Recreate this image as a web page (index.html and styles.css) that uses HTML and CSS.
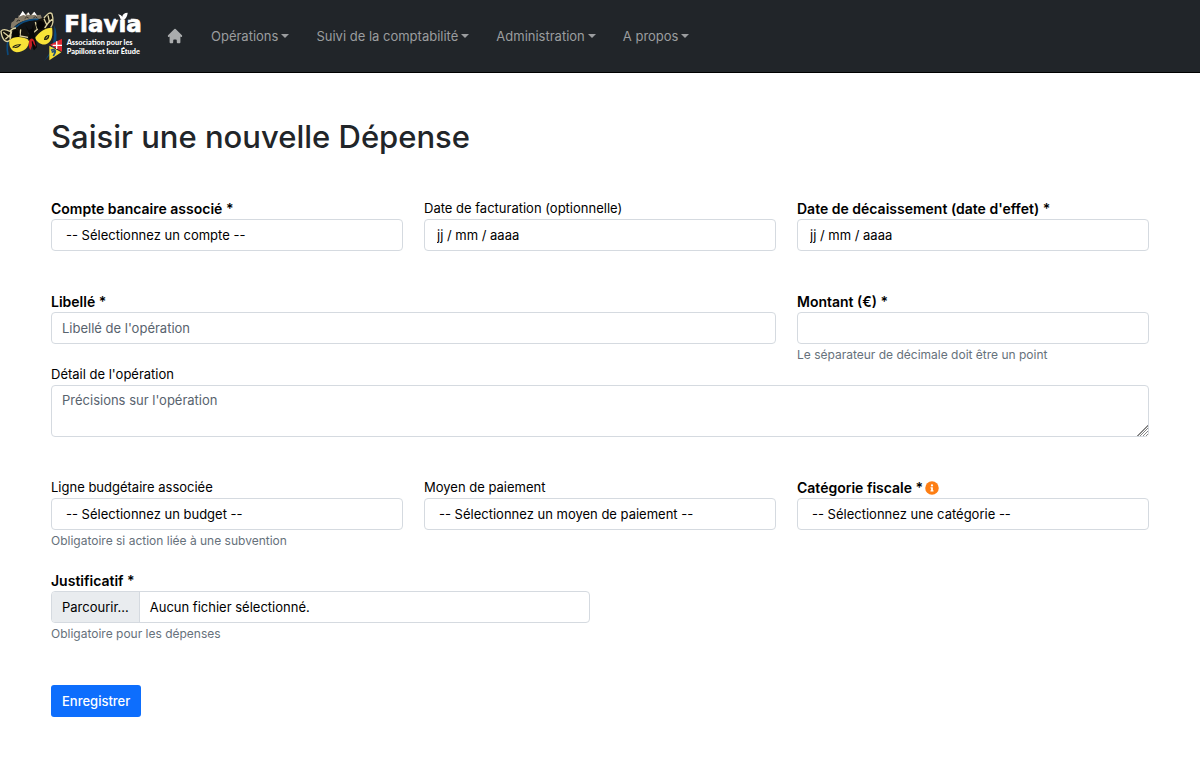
FILE: index.html
```html
<!DOCTYPE html>
<html lang="fr">
<head>
<meta charset="utf-8">
<meta name="viewport" content="width=device-width, initial-scale=1">
<title>Saisir une nouvelle Dépense</title>
<link rel="stylesheet" href="styles.css">
</head>
<body>
<header class="navbar">
  <a class="brand" href="#" aria-label="Flavia">
    <svg class="brand-logo" viewBox="0 0 450 216" aria-hidden="true">
      <!-- mountains -->
      <path d="M32 84 L34 68 L42 62 L46 54 L54 54 L56 46 L62 47 L68 33 L76 44 L84 37 L92 46 L102 35 L110 46 L122 44 L128 60 L112 58 L90 60 L66 68 L44 84Z" fill="#857b69"/>
      <path d="M57 50 L68 33 L79 48 L70 45Z M95 46 L103 35 L112 48 L104 44Z M80 44 L85 37 L90 44Z" fill="#fff"/>
      <path d="M50 66 L54 60 L60 62 M74 56 L80 51 L86 54 M100 54 L106 50 L112 54" fill="none" stroke="#3a352c" stroke-width="3"/>
      <!-- globe outline -->
      <path d="M36 92 C44 72 66 61 92 60 C108 58 122 62 130 70 L98 100 L70 96Z" fill="#111315"/>
      <path d="M24 165 C16 126 28 86 70 66 C88 58 108 55 128 62" fill="none" stroke="#0b4a7d" stroke-width="5"/>
      <path d="M163 76 C178 112 168 154 132 183 C154 158 164 128 163 76Z" fill="#0b4a7d"/>
      <!-- upper wings -->
      <path d="M3 94 C8 86 22 90 30 94 C42 78 62 80 78 92 L94 112 L62 116 L30 120 C18 132 10 118 3 94Z" fill="#15130d"/>
      <path d="M158 43 C150 34 142 44 134 54 C118 52 104 64 96 84 L98 112 L126 98 L152 82 C162 70 160 56 158 43Z" fill="#15130d"/>
      <path d="M30 120 C18 132 6 118 3 94 C8 86 22 90 30 94 C36 86 42 84 48 84 M132 54 C142 42 150 34 156 42 C160 56 162 70 152 82 M10 97 L28 110 L34 94 M16 118 L30 105 M62 88 L60 108 L84 112 M36 94 L30 118 M132 56 L140 74 L156 58 M144 46 L148 64 L134 84 M106 66 L112 88 L100 98" fill="none" stroke="#dcd2a2" stroke-width="4"/>
      <ellipse cx="47" cy="103" rx="12" ry="13" fill="#050505"/>
      <ellipse cx="121" cy="76" rx="12" ry="13" fill="#050505"/>
      <!-- lower wings -->
      <path d="M28 121 C42 108 66 108 88 121 C87 143 72 156 50 157 C34 155 26 140 28 121Z" fill="#f8e238"/>
      <path d="M105 114 C116 96 138 82 156 83 C160 104 156 126 138 133 C124 136 112 128 105 114Z" fill="#f8e238"/>
      <path d="M36 142 C48 147 58 143 64 133 C54 131 42 134 36 142Z M132 120 C132 110 138 105 148 105 C149 115 142 122 132 120Z" fill="#222014"/>
      <path d="M43 141 L56 136 M137 116 L144 109" stroke="#d7c838" stroke-width="3"/>
      <!-- body -->
      <path d="M76 76 L86 90 L96 86 L99 74 L104 104 L111 142 L102 151 L97 124 L85 122 L88 102Z" fill="#080808"/>
      <path d="M88 120 Q96 110 103 122 L108 141 L99 130 L91 150 C85 142 85 130 88 120Z" fill="#c51f24"/>
      <path d="M97 124 L101 148" stroke="#08090a" stroke-width="4"/>
      <!-- regional badges -->
      <path d="M150 134 L186 116 V155Z" fill="#e12a32"/>
      <path d="M170 124 V147 M158 136 H186" stroke="#fff" stroke-width="4"/>
      <path d="M148 137 L184 157 L148 181Z" fill="#f2dc36"/>
      <path d="M153 151 C163 146 169 151 164 160 L160 168 M155 157 L166 152" fill="none" stroke="#22517b" stroke-width="5"/>
      <text class="logo-name" x="193" y="97">Flavia</text>
      <path class="logo-cover" d="M348 30 H392 V59 H348Z"/>
      <path d="M354 44 C360 42 364 47 367 50 C367 43 373 38 383 38 C382 52 374 61 366 60 C358 57 363 51 354 44Z" fill="#fff"/>
      <text class="logo-line" x="200" y="135">Association pour les</text>
      <text class="logo-line" x="200" y="163">Papillons et leur Étude</text>
    </svg>
  </a>
  <nav class="menu" aria-label="Navigation principale">
    <a class="menu-home" href="#" aria-label="Accueil">
      <svg class="home-icon" viewBox="0 0 20 20" aria-hidden="true"><path d="M10.707 2.293a1 1 0 00-1.414 0l-7 7a1 1 0 001.414 1.414L4 10.414V17a1 1 0 001 1h2a1 1 0 001-1v-2a1 1 0 011-1h2a1 1 0 011 1v2a1 1 0 001 1h2a1 1 0 001-1v-6.586l.293.293a1 1 0 001.414-1.414l-7-7z" fill="currentColor"/></svg>
    </a>
    <button class="menu-item" type="button">Opérations</button>
    <button class="menu-item" type="button">Suivi de la comptabilité</button>
    <button class="menu-item" type="button">Administration</button>
    <button class="menu-item" type="button">A propos</button>
  </nav>
</header>
<main class="page">
  <h1 class="title">Saisir une nouvelle Dépense</h1>
  <form class="form">
    <div class="row spaced">
      <div class="field">
        <label class="label required" for="compte">Compte bancaire associé *</label>
        <select class="control select" id="compte"><option>-- Sélectionnez un compte --</option></select>
      </div>
      <div class="field">
        <label class="label" for="facturation">Date de facturation (optionnelle)</label>
        <input class="control date" id="facturation" type="text" placeholder="jj / mm / aaaa">
      </div>
      <div class="field">
        <label class="label required" for="decaissement">Date de décaissement (date d'effet) *</label>
        <input class="control date" id="decaissement" type="text" placeholder="jj / mm / aaaa">
      </div>
    </div>
    <div class="row">
      <div class="field wide">
        <label class="label required" for="libelle">Libellé *</label>
        <input class="control" id="libelle" type="text" placeholder="Libellé de l'opération">
      </div>
      <div class="field">
        <label class="label required" for="montant">Montant (€) *</label>
        <input class="control" id="montant" type="text" inputmode="decimal">
        <small class="help">Le séparateur de décimale doit être un point</small>
      </div>
    </div>
    <div class="row spaced">
      <div class="field full">
        <label class="label" for="detail">Détail de l'opération</label>
        <textarea class="control area" id="detail" rows="2" placeholder="Précisions sur l'opération"></textarea>
      </div>
    </div>
    <div class="row close">
      <div class="field">
        <label class="label" for="budget">Ligne budgétaire associée</label>
        <select class="control select" id="budget"><option>-- Sélectionnez un budget --</option></select>
        <small class="help">Obligatoire si action liée à une subvention</small>
      </div>
      <div class="field">
        <label class="label" for="paiement">Moyen de paiement</label>
        <select class="control select" id="paiement"><option>-- Sélectionnez un moyen de paiement --</option></select>
      </div>
      <div class="field">
        <label class="label required" for="categorie">Catégorie fiscale *
          <svg class="info-icon" viewBox="0 0 512 512" aria-hidden="true"><circle cx="256" cy="256" r="248" fill="#fd7e14"/><path d="M256 118a42 42 0 110 84 42 42 0 010-84zm56 254a12 12 0 01-12 12h-88a12 12 0 01-12-12v-24a12 12 0 0112-12h12v-64h-12a12 12 0 01-12-12v-24a12 12 0 0112-12h64a12 12 0 0112 12v100h12a12 12 0 0112 12z" fill="#fff"/></svg>
        </label>
        <select class="control select" id="categorie"><option>-- Sélectionnez une catégorie --</option></select>
      </div>
    </div>
    <div class="row halves">
      <div class="field">
        <label class="label required" for="justificatif">Justificatif *</label>
        <div class="file">
          <span class="file-button">Parcourir...</span>
          <span class="file-name">Aucun fichier sélectionné.</span>
          <input class="file-input" id="justificatif" type="file">
        </div>
        <small class="help">Obligatoire pour les dépenses</small>
      </div>
    </div>
    <button class="submit" type="submit">Enregistrer</button>
  </form>
</main>
</body>
</html>
```
FILE: styles.css
```css
* {
  box-sizing: border-box;
}

body {
  margin: 0;
  background: #fff;
  color: #000;
  font-family: Inter, "Liberation Sans", sans-serif;
  font-size: 13px;
  line-height: 21px;
}

.navbar {
  display: flex;
  align-items: center;
  gap: 16px;
  background: #212529;
  border-bottom: 1px solid #000;
}

.brand,
.brand-logo {
  display: block;
}

.brand-logo {
  width: 150px;
  height: 72px;
}

.logo-name {
  fill: #fff;
  font-family: "DejaVu Sans", sans-serif;
  font-size: 69px;
  font-weight: 700;
  stroke: #fff;
  stroke-width: 2px;
}

.logo-cover {
  fill: #212529;
}

.logo-line {
  fill: #fff;
  font-family: Lato, sans-serif;
  font-size: 22px;
  font-weight: 900;
}

.menu {
  display: flex;
  align-items: center;
  gap: 27px;
}

.menu-home {
  display: flex;
  color: #aaacad;
}

.home-icon {
  width: 18px;
  height: 18px;
}

.menu-item {
  display: flex;
  align-items: center;
  gap: 3px;
  padding: 0;
  border: 0;
  background: none;
  color: #9b9d9f;
  font: inherit;
  white-space: nowrap;
}

.menu-item::after {
  content: "";
  border-top: 4px solid currentColor;
  border-right: 4px solid transparent;
  border-left: 4px solid transparent;
}

.page {
  padding: 43px 51px;
}

.title {
  margin: 0 0 40px;
  color: #212529;
  font-size: 31px;
  font-weight: 500;
  line-height: 42px;
}

.row {
  display: grid;
  grid-template-columns: repeat(3, minmax(0, 1fr));
  column-gap: 21px;
}

.halves {
  grid-template-columns: repeat(2, minmax(0, 1fr));
}

.spaced {
  margin-bottom: 40px;
}

.close {
  margin-bottom: 20px;
}

.wide {
  grid-column: span 2;
}

.full {
  grid-column: 1 / -1;
}

.label {
  display: flex;
  align-items: center;
}

.required {
  font-size: 14px;
  font-weight: 600;
}

.info-icon {
  width: 14px;
  height: 14px;
  margin-left: 2px;
}

.control {
  display: block;
  width: 100%;
  height: 32px;
  margin: 0;
  padding: 4px 10px;
  border: 1px solid #d5dae0;
  border-radius: 4px;
  background: #fff;
  color: #000;
  font: inherit;
}

.control::placeholder {
  color: #58636e;
  opacity: 1;
}

.select {
  padding-left: 14px;
  appearance: none;
}

.date {
  padding-left: 12px;
}

.date::placeholder {
  color: #000;
}

.area {
  height: 52px;
  resize: vertical;
}

.area::-webkit-resizer {
  background:
    linear-gradient(135deg, #fff 50%, transparent 50%) right bottom / 12px 12px no-repeat,
    repeating-linear-gradient(135deg, #fff 0 1px, #888 1px 2px) right bottom / 12px 12px no-repeat;
}

.help {
  display: block;
  margin-top: 2px;
  color: #66717b;
  font-size: 12px;
  line-height: 18px;
}

.file {
  position: relative;
  display: flex;
  height: 32px;
  overflow: hidden;
  border: 1px solid #d5dae0;
  border-radius: 4px;
}

.file-button {
  padding: 5px 10px;
  border-right: 1px solid #d5dae0;
  background: #e9ecef;
}

.file-name {
  padding: 5px 10px;
}

.file-input {
  position: absolute;
  inset: 0;
  width: 100%;
  opacity: 0;
}

.submit {
  height: 32px;
  margin-top: 42px;
  padding: 0 11px;
  border: 0;
  border-radius: 3px;
  background: #0d6efd;
  color: #fff;
  font: inherit;
  font-weight: 500;
}
```
